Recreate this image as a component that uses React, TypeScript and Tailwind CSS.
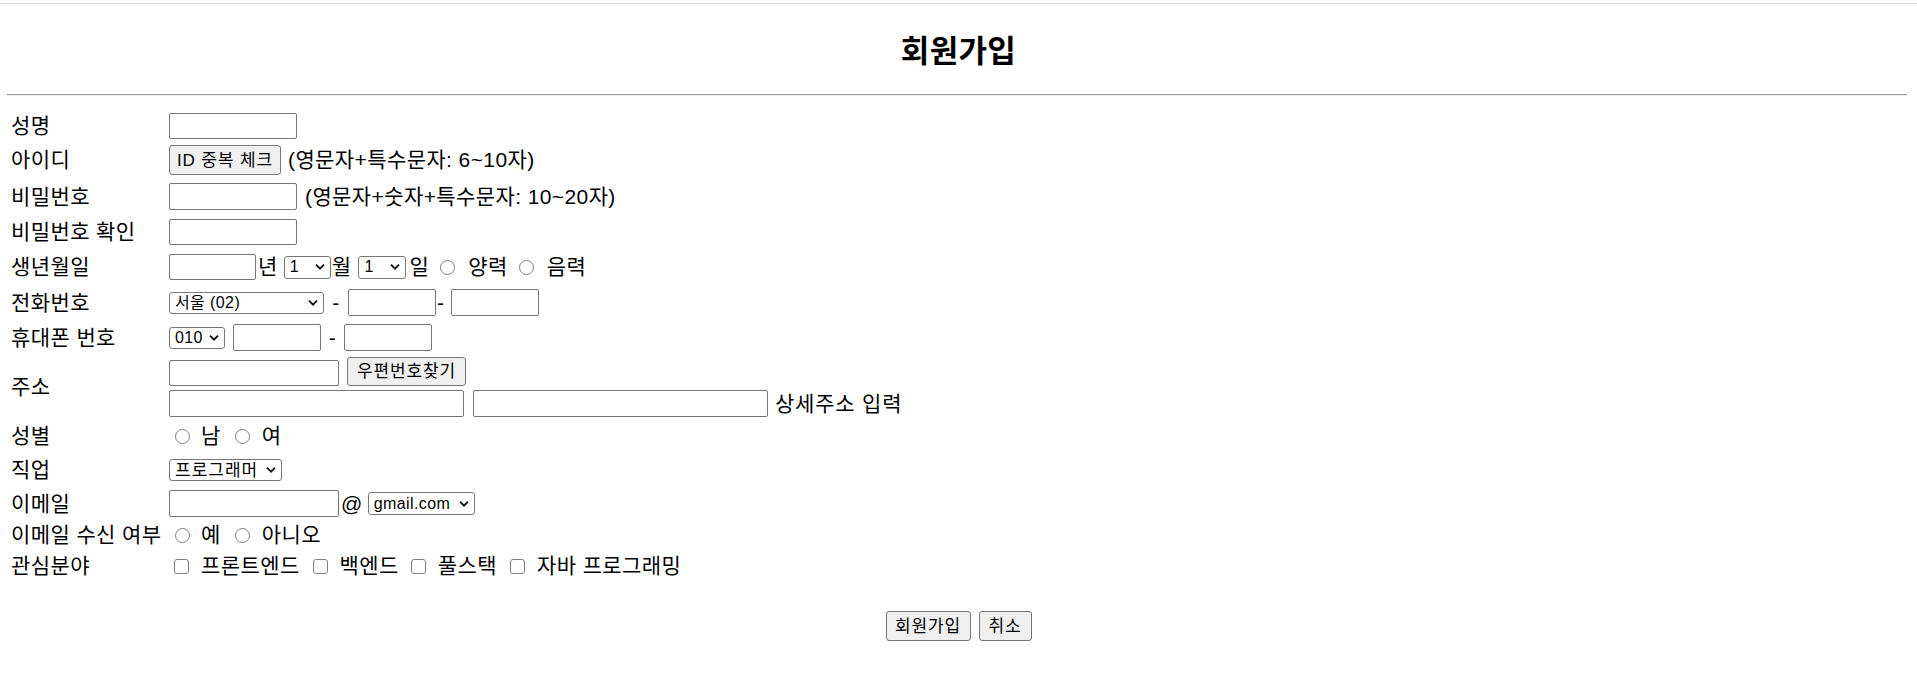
import clsx from "clsx";
import type { ReactNode } from "react";

function TextBox({ className }: { className: string }) {
  return (
    <input
      type="text"
      className={clsx(
        "box-border shrink-0 border border-[#767676] rounded-[2px] bg-white px-[3px] text-[16px] outline-none",
        className
      )}
    />
  );
}

function Btn({ className, children }: { className: string; children: ReactNode }) {
  return (
    <button
      type="button"
      className={clsx(
        "box-border shrink-0 flex items-center justify-center border border-[#767676] rounded-[3px] bg-[#efefef] text-[17px] tracking-[0.9px] leading-none text-black",
        className
      )}
    >
      {children}
    </button>
  );
}

function Sel({
  className,
  options,
  textClass = "text-[16px]",
}: {
  className: string;
  options: string[];
  textClass?: string;
}) {
  return (
    <span className={clsx("relative inline-flex shrink-0", className)}>
      <select
        className={clsx(
          "appearance-none box-border w-full h-full border border-[#767676] rounded-[3px] bg-white leading-none pl-[5px] pr-[18px] text-black outline-none",
          textClass
        )}
      >
        {options.map((o) => (
          <option key={o}>{o}</option>
        ))}
      </select>
      <svg
        className="absolute right-[6px] top-1/2 -translate-y-1/2 pointer-events-none"
        width="10"
        height="7"
        viewBox="0 0 10 7"
      >
        <path d="M1 1.2 L5 5.2 L9 1.2" stroke="#111" strokeWidth="1.9" fill="none" />
      </svg>
    </span>
  );
}

function Radio({ className, name }: { className: string; name: string }) {
  return (
    <input
      type="radio"
      name={name}
      className={clsx(
        "appearance-none shrink-0 w-[15px] h-[15px] rounded-full border border-[#808080] bg-white",
        className
      )}
    />
  );
}

function Check({ className }: { className: string }) {
  return (
    <input
      type="checkbox"
      className={clsx(
        "appearance-none shrink-0 w-[15px] h-[15px] rounded-[3px] border border-[#808080] bg-white",
        className
      )}
    />
  );
}

function Row({
  label,
  h,
  children,
}: {
  label: string;
  h: string;
  children: ReactNode;
}) {
  return (
    <div className={clsx("flex items-center", h)}>
      <div className="w-[169px] shrink-0 pl-[11px] whitespace-nowrap">{label}</div>
      <div className="flex items-center whitespace-nowrap">{children}</div>
    </div>
  );
}

export default function App() {
  return (
    <div className="min-h-screen bg-white text-black text-[21px] tracking-[0.4px] leading-[24px] font-['Liberation_Sans','Noto_Sans_CJK_KR',sans-serif]">
      <div className="h-[3px]" />
      <div className="h-px bg-[#dcdcdc]" />
      <div className="h-[90px] pt-[4px] flex items-center justify-center">
        <h2 className="text-[31px] tracking-[0.3px] font-bold leading-none">회원가입</h2>
      </div>
      <div className="ml-[7px] mr-[10px] border-t border-t-[#9a9a9a] border-b border-b-[#eeeeee]" />

      <form className="mt-[15px] flex flex-col gap-[2px]">
        <Row label="성명" h="h-[30px]">
          <TextBox className="w-[128px] h-[26px]" />
        </Row>
        <Row label="아이디" h="h-[34px]">
          <Btn className="w-[112px] h-[30px]">ID 중복 체크</Btn>
          <span className="ml-[7px]">(영문자+특수문자: 6~10자)</span>
        </Row>
        <Row label="비밀번호" h="h-[35px]">
          <TextBox className="w-[128px] h-[27px]" />
          <span className="ml-[8px]">(영문자+숫자+특수문자: 10~20자)</span>
        </Row>
        <Row label="비밀번호 확인" h="h-[32px]">
          <TextBox className="w-[128px] h-[26px]" />
        </Row>
        <Row label="생년월일" h="h-[34px]">
          <TextBox className="w-[87px] h-[26px]" />
          <span className="ml-[2px]">년</span>
          <Sel className="ml-[6px] w-[47px] h-[23px]" options={["1"]} />
          <span className="ml-[1px]">월</span>
          <Sel className="ml-[7px] w-[48px] h-[23px]" options={["1"]} />
          <span className="ml-[3px]">일</span>
          <Radio name="cal" className="ml-[11px]" />
          <span className="ml-[13px]">양력</span>
          <Radio name="cal" className="ml-[11px]" />
          <span className="ml-[13px]">음력</span>
        </Row>
        <Row label="전화번호" h="h-[33px]">
          <Sel className="w-[155px] h-[22px]" options={["서울 (02)"]} />
          <span className="w-[24px] text-center">-</span>
          <TextBox className="w-[88px] h-[27px]" />
          <span className="w-[15px] pl-[1px]">-</span>
          <TextBox className="w-[88px] h-[27px]" />
        </Row>
        <Row label="휴대폰 번호" h="h-[33px]">
          <Sel className="w-[56px] h-[22px]" options={["010"]} />
          <TextBox className="ml-[8px] w-[88px] h-[27px]" />
          <span className="w-[23px] text-center">-</span>
          <TextBox className="w-[88px] h-[27px]" />
        </Row>
        <Row label="주소" h="h-[62px]">
          <div className="flex flex-col gap-[4px]">
            <div className="flex items-end h-[29px]">
              <TextBox className="w-[170px] h-[26px]" />
              <Btn className="ml-[8px] w-[119px] h-[29px]">우편번호찾기</Btn>
            </div>
            <div className="flex items-center h-[27px]">
              <TextBox className="w-[295px] h-[27px]" />
              <TextBox className="ml-[9px] w-[295px] h-[27px]" />
              <span className="ml-[7px] tracking-[0.8px]">상세주소 입력</span>
            </div>
          </div>
        </Row>
        <Row label="성별" h="h-[32px]">
          <Radio name="gender" className="ml-[6px]" />
          <span className="ml-[11px]">남</span>
          <Radio name="gender" className="ml-[14px]" />
          <span className="ml-[12px]">여</span>
        </Row>
        <Row label="직업" h="h-[32px]">
          <Sel
            className="w-[113px] h-[22px]"
            options={["프로그래머"]}
            textClass="text-[17px] tracking-[1px]"
          />
        </Row>
        <Row label="이메일" h="h-[31px]">
          <TextBox className="w-[170px] h-[27px]" />
          <span className="ml-[2px]">@</span>
          <Sel className="ml-[5px] w-[107px] h-[23px]" options={["gmail.com"]} />
        </Row>
        <Row label="이메일 수신 여부" h="h-[28px]">
          <Radio name="recv" className="ml-[6px]" />
          <span className="ml-[11px]">예</span>
          <Radio name="recv" className="ml-[14px]" />
          <span className="ml-[12px]">아니오</span>
        </Row>
        <Row label="관심분야" h="h-[30px]">
          <Check className="ml-[5px]" />
          <span className="ml-[12px]">프론트엔드</span>
          <Check className="ml-[13px]" />
          <span className="ml-[12px]">백엔드</span>
          <Check className="ml-[12px]" />
          <span className="ml-[12px]">풀스택</span>
          <Check className="ml-[13px]" />
          <span className="ml-[12px]">자바 프로그래밍</span>
        </Row>
      </form>

      <div className="mt-[30px] flex justify-center gap-[8px]">
        <Btn className="w-[85px] h-[30px]">회원가입</Btn>
        <Btn className="w-[53px] h-[30px]">취소</Btn>
      </div>
    </div>
  );
}
